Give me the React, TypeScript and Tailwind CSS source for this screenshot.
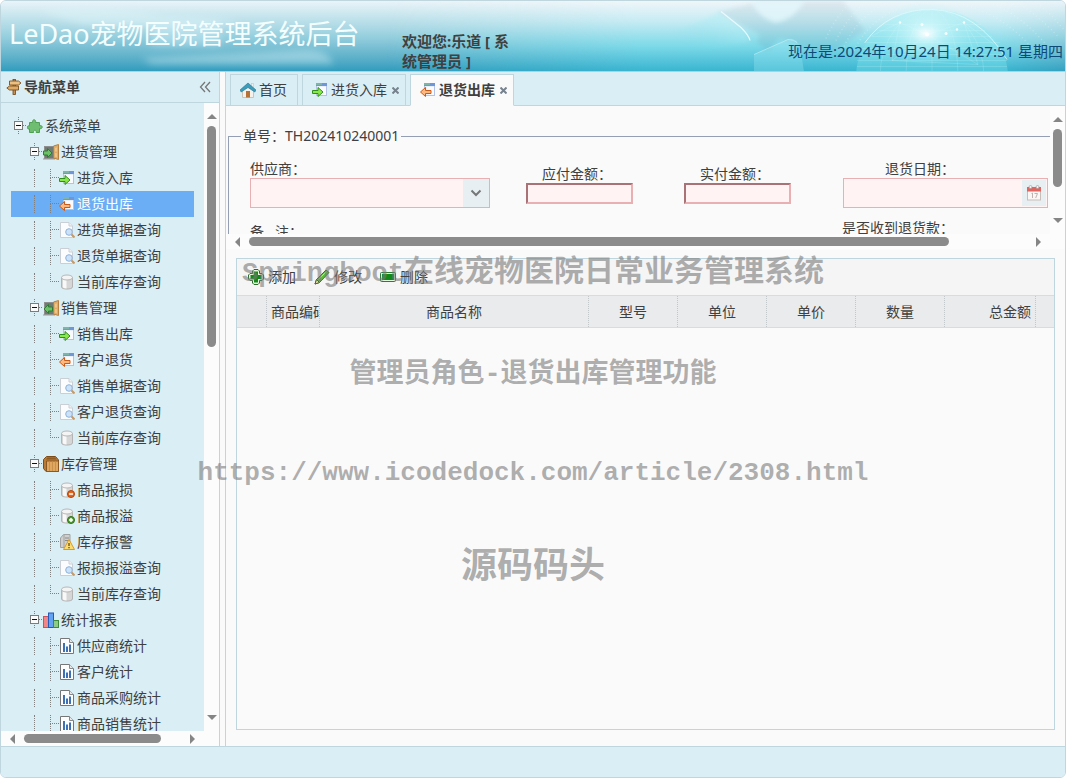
import React, { HTMLAttributes, ReactNode, useState } from 'react';
import { clsx } from 'clsx';

type IconName =
    | 'sign' | 'puzzle' | 'doorIn' | 'doorOut' | 'winIn' | 'winOut' | 'search' | 'db' | 'dbMinus' | 'dbPlus' | 'warn'
    | 'box' | 'bars' | 'report' | 'home' | 'add' | 'pencil' | 'remove' | 'calendar';

const win = (
    <>
        <rect x="4.5" y="1.5" width="10" height="12" fill="#e9effb" stroke="#b4c2e6" />
        <path d="M7 5h7v8H9z" fill="#f9fbff" />
        <rect x="4" y="1" width="11" height="3" fill="#6f97d8" />
        <rect x="4" y="1" width="6" height="2" fill="#7fb5a8" />
    </>
);

const cylinder = (
    <>
        <path d="M2.500 3.500v9.500c0 2.700 11 2.700 11 0V3.500z" fill="#d6d6d6" stroke="#b4b4b4" />
        <path d="M4 5v8.500c.8.600 2 .9 3.500 1V5.500z" fill="#f8f8f8" />
        <ellipse cx="8" cy="3.500" rx="5.500" ry="2.500" fill="#f4f4f4" stroke="#b8b8b8" />
    </>
);

const doorway = (
    <>
        <rect x="1.500" y="2.500" width="10" height="12" fill="#6f7a72" stroke="#8f8f8f" />
        <path d="M0 15h12" stroke="#999" />
        <path d="M10.500 2l5-1.500v15l-5-1.500z" fill="#e0ad68" stroke="#b98140" />
        <path d="M12 4l2-.6v4l-2 .4zM12 9l2 .2v4L12 12.700z" fill="#edc48a" />
    </>
);

const iconShapes: Record<IconName, ReactNode> = {
    sign: (
        <>
            <rect x="7" y="0.500" width="2.500" height="15" fill="#c98f4c" stroke="#6e4719" strokeWidth=".8" />
            <path d="M3.500 2h9l2.500 2-2.500 2h-9z" fill="#ecc083" stroke="#7a4f1e" strokeWidth=".9" />
            <path d="M12.500 7h-9L.8 9l2.700 2h9z" fill="#e0ab68" stroke="#7a4f1e" strokeWidth=".9" />
        </>
    ),
    puzzle: <path d="M2.500 4.500h3.200c-1.200-3.600 4-3.600 2.800 0h4v3.200c3.600-1.200 3.600 4 0 2.800v4H9.200c.8-3-3.400-3-2.600 0H2.500v-3.500c-3 .6-3-3.800 0-3.200z" fill="#6fbd70" stroke="#4f9f52" />,
    doorIn: <>{doorway}<path d="M.5 7h4V4.500L9 9l-4.500 4.500V11h-4z" fill="#6cc068" stroke="#2f7d33" /></>,
    doorOut: <>{doorway}<path d="M9.500 7H5.500V4.500L1 9l4.500 4.500V11h4z" fill="#6cc068" stroke="#2f7d33" /></>,
    winIn: <>{win}<path d="M.5 8.500h5.500v-3l5 4.500-5 4.500v-3H.5z" fill="#8be84a" stroke="#2f8f1d" /></>,
    winOut: <>{win}<path d="M11 8.500H5.500v-3L.5 10l5 4.500v-3H11z" fill="#ffb980" stroke="#cc5a14" /></>,
    search: (
        <>
            <path d="M1.500.5h8.500l3.500 3.500v11.500h-12z" fill="#fbfcfd" stroke="#c9cfd4" />
            <path d="M10 .5v3.500h3.500" fill="#eef1f4" stroke="#c9cfd4" />
            <circle cx="10" cy="10" r="3.300" fill="#cbe2f8" stroke="#8db2dc" />
            <path d="M12.500 12.500l3 3" stroke="#c49a6a" strokeWidth="2" />
        </>
    ),
    db: cylinder,
    dbMinus: <>{cylinder}<circle cx="12" cy="12" r="3.500" fill="#e8651d" stroke="#b24409" /><path d="M10 12h4" stroke="#fff" strokeWidth="1.500" /></>,
    dbPlus: <>{cylinder}<circle cx="12" cy="12" r="3.500" fill="#559e35" stroke="#2f701a" /><path d="M10 12h4M12 10v4" stroke="#fff" strokeWidth="1.500" /></>,
    warn: (
        <>
            <path d="M1.500 4l3-3.500h6.500v13h-9.500z" fill="#cfcfcf" stroke="#a2a2a2" />
            <path d="M5 1v12" stroke="#a2a2a2" />
            <path d="M6 4h4M6 6.500h3" stroke="#8a8a8a" />
            <path d="M10 5.500l5.500 10H4.500z" fill="#fbdc72" stroke="#dc9a22" />
            <path d="M10 9v3M10 13v1.200" stroke="#654710" strokeWidth="1.300" />
        </>
    ),
    box: (
        <>
            <path d="M.5 3.500l3-3h9l3 3.500v11.500H3l-2.500-3z" fill="#b87a35" stroke="#7c4d1a" />
            <path d="M3.500 5h12v10.500h-12z" fill="#dfa75f" stroke="#8a5822" />
            <path d="M6.500 5.500v9.500M9.500 5.500v9.500M12.500 5.500v9.500" stroke="#c9914a" />
            <path d="M3 3.500l1.500-2h7.500L13.500 3.500z" fill="#8f5c24" />
        </>
    ),
    bars: (
        <>
            <rect x="0.500" y="4.500" width="5" height="11" fill="#f28585" stroke="#c9525c" />
            <rect x="5.500" y="1" width="5" height="14.500" fill="#64a2f2" stroke="#2459b8" />
            <rect x="10.500" y="8.500" width="5" height="7" fill="#8ecb88" stroke="#3b8a3d" />
        </>
    ),
    report: (
        <>
            <path d="M1.500.5h9l4 4v11h-13z" fill="#fdfdfd" stroke="#777" />
            <path d="M10.500.5v4h4" fill="#e9e9e9" stroke="#888" />
            <path d="M5 5v9M8 8.500v5.500M11 6.500v7.500" stroke="#3d70b6" strokeWidth="2" />
        </>
    ),
    home: (
        <>
            <path d="M2.500 8L8 3l5.500 5v7.500h-11z" fill="#f4f1ec" stroke="#c9c4bc" />
            <rect x="6" y="9" width="4" height="6.500" fill="#b67236" />
            <rect x="11.500" y="1.500" width="2" height="4" fill="#eee" stroke="#c5c5c5" strokeWidth=".6" />
            <path d="M8 1l8 7-1.200 2L8 5.500 1.200 10 0 8z" fill="#3a9dbc" stroke="#23738f" strokeWidth=".6" />
        </>
    ),
    add: (
        <>
            <path d="M4.500 2l1.500-1.500h4L11.500 2v2.500H14L15.500 6v4L14 11.500h-2.500V14L10 15.500H6L4.500 14v-2.500H2L.5 10V6L2 4.500h2.500z" fill="#e3f8dc" stroke="#2c6b2c" />
            <path d="M6 2.500h4V6h3.500v4H10v3.500H6V10H2.500V6H6z" fill="#0f8a18" />
        </>
    ),
    pencil: (
        <>
            <path d="M1 15l1.500-4.500L12 1l3 2.500-9.500 10z" fill="#5fbf35" stroke="#2c7a22" />
            <path d="M1 15l1.500-4.500 3 3z" fill="#e9dcae" stroke="#3f6f22" />
            <path d="M4.500 10.500L12.500 2.500" stroke="#b4ec8f" />
        </>
    ),
    remove: (
        <>
            <rect x="0.500" y="3.500" width="15" height="9" rx="1" fill="#e3f8dc" stroke="#2c7d33" />
            <rect x="2" y="5" width="12" height="6" fill="#0f8a18" />
        </>
    ),
    calendar: (
        <>
            <rect x="1.500" y="2.500" width="13" height="12.500" fill="#fbf7f4" stroke="#c9bdb9" />
            <rect x="1" y="2" width="14" height="4.500" fill="#dd6660" />
            <circle cx="4.500" cy="2" r="1.500" fill="#f2f2f2" stroke="#999" strokeWidth=".6" />
            <circle cx="11.500" cy="2" r="1.500" fill="#f2f2f2" stroke="#999" strokeWidth=".6" />
            <path d="M5.500 8.500l1-.5v5M8.500 8.500h3l-1.800 4.500" fill="none" stroke="#bdb3af" />
        </>
    ),
};

function Icon({ name, className }: { name: IconName; className?: string; }) {
    return (
        <svg viewBox="0 0 16 16" className={clsx("w-4 h-4 shrink-0", className)} aria-hidden="true">
            {iconShapes[name]}
        </svg>
    );
}

type Group = { name: string; icon: IconName; more?: boolean; items: [IconName, string][]; };

const groups: Group[] = [
    {
        name: '进货管理', icon: 'doorIn',
        items: [['winIn', '进货入库'], ['winOut', '退货出库'], ['search', '进货单据查询'], ['search', '退货单据查询'], ['db', '当前库存查询']],
    },
    {
        name: '销售管理', icon: 'doorOut',
        items: [['winIn', '销售出库'], ['winOut', '客户退货'], ['search', '销售单据查询'], ['search', '客户退货查询'], ['db', '当前库存查询']],
    },
    {
        name: '库存管理', icon: 'box',
        items: [['dbMinus', '商品报损'], ['dbPlus', '商品报溢'], ['warn', '库存报警'], ['search', '报损报溢查询'], ['db', '当前库存查询']],
    },
    {
        name: '统计报表', icon: 'bars', more: true,
        items: [['report', '供应商统计'], ['report', '客户统计'], ['report', '商品采购统计'], ['report', '商品销售统计']],
    },
];

const columns = [
    { label: '', className: 'w-[30px]' },
    { label: '商品编码', className: 'w-[53px]' },
    { label: '商品名称', className: 'w-[269px]' },
    { label: '型号', className: 'w-[89px]' },
    { label: '单位', className: 'w-[89px]' },
    { label: '单价', className: 'w-[89px]' },
    { label: '数量', className: 'w-[89px]' },
    { label: '总金额', className: 'w-[91px]' },
];

function Arrow({ dir }: { dir: 'up' | 'down' | 'left' | 'right'; }) {
    const d = { up: 'M0 8l5-5 5 5z', down: 'M0 2l5 5 5-5z', left: 'M7 0v10L2 5z', right: 'M3 0v10l5-5z' }[dir];
    return <svg viewBox="0 0 10 10" className="w-2.5 h-2.5 shrink-0 fill-[#858585]"><path d={d} /></svg>;
}

function ScrollY({ thumb }: { thumb: string; }) {
    return (
        <div className="w-[15px] shrink-0 py-2 flex flex-col items-center gap-[5px] bg-[#fcfcfc]">
            <Arrow dir="up" />
            <div className="flex-1 w-[9px]"><div className={clsx("w-full bg-[#8b8b8b] rounded-full", thumb)} /></div>
            <Arrow dir="down" />
        </div>
    );
}

function ScrollX({ thumb }: { thumb: string; }) {
    return (
        <div className="h-[15px] shrink-0 pl-[7px] pr-[22px] flex items-center gap-[6px] bg-[#fcfcfc]">
            <Arrow dir="left" />
            <div className="flex-1 h-[9px]"><div className={clsx("h-full bg-[#8b8b8b] rounded-full", thumb)} /></div>
            <Arrow dir="right" />
        </div>
    );
}

function GuideLine() {
    return <span className="w-4 h-[18px] pl-[7px]"><span className="block h-full border-l border-dotted border-[#808080]" /></span>;
}

function GuideBranch({ last }: { last: boolean; }) {
    return (
        <span className="w-4 h-[18px] pl-[7px]">
            <span className="block h-[9px] border-l border-b border-dotted border-[#808080]" />
            {!last && <span className="block h-[9px] border-l border-dotted border-[#808080]" />}
        </span>
    );
}

function Expander({ open, ...rest }: { open: boolean; } & HTMLAttributes<HTMLButtonElement>) {
    return (
        <button className="w-4 h-[18px] shrink-0" aria-label="展开或折叠" {...rest}>
            <svg viewBox="0 0 16 18" className="w-4 h-[18px]" fill="none">
                <path d="M7.500 0v4M7.500 14v4M12 8.500h4" stroke="#808080" strokeDasharray="1 1" />
                <rect x="3.500" y="4.500" width="8" height="8" fill="#fbfbfb" stroke="#7c7c7c" />
                <path d="M5 8.500h5" stroke="#111" />
                {!open && <path d="M7.500 6v5" stroke="#111" />}
            </svg>
        </button>
    );
}

function NodeLabel({ icon, text }: { icon: IconName; text: string; }) {
    return (
        <a href="#" className="flex items-center gap-0.5 whitespace-nowrap"><Icon name={icon} />{text}</a>
    );
}

function TreeGroup({ group, selected, onSelect }: { group: Group; selected: string; onSelect: (key: string) => void; }) {
    const [open, setOpen] = useState(true);
    return (
        <li>
            <div className="h-[26px] pl-4 flex items-center">
                <Expander open={open} onClick={() => setOpen((v) => !v)} />
                <NodeLabel icon={group.icon} text={group.name} />
            </div>
            {open &&
                <ul>
                    {group.items.map(([icon, text], idx) => {
                        const key = `${group.name}/${text}`;
                        return (
                            <li
                                className={clsx("h-[26px] pl-4 flex items-center", key === selected && "bg-[#6caef5] text-white")}
                                onClick={() => onSelect(key)}
                                key={idx}
                            >
                                <GuideLine />
                                <GuideBranch last={!group.more && idx === group.items.length - 1} />
                                <NodeLabel icon={icon} text={text} />
                            </li>
                        );
                    })}
                </ul>
            }
        </li>
    );
}

function Sidebar() {
    const [selected, setSelected] = useState('进货管理/退货出库');
    return (
        <aside className="w-[219px] shrink-0 flex flex-col bg-[#daeef5] border-r border-[#bfd6de]">
            <div className="h-[31px] shrink-0 pl-[5px] pr-2 flex items-center gap-0.5 border-b border-[#bfd6de]">
                <Icon name="sign" />
                <h2 className="flex-1 font-bold">导航菜单</h2>
                <button aria-label="收起菜单">
                    <svg viewBox="0 0 12 12" className="w-3 h-3" fill="none" stroke="#777" strokeWidth="1.300">
                        <path d="M6 1L1.500 6 6 11M11 1L6.500 6l4.500 5" />
                    </svg>
                </button>
            </div>
            <div className="flex-1 min-h-0 flex">
                <nav className="flex-1 min-w-0 p-2.5 overflow-hidden">
                    <div className="h-[26px] flex items-center">
                        <Expander open />
                        <NodeLabel icon="puzzle" text="系统菜单" />
                    </div>
                    <ul>
                        {groups.map((group) => <TreeGroup group={group} selected={selected} onSelect={setSelected} key={group.name} />)}
                    </ul>
                </nav>
                <ScrollY thumb="h-[38%]" />
            </div>
            <ScrollX thumb="w-[87%]" />
        </aside>
    );
}

function HeaderSmudge() {
    return (
        <svg viewBox="0 0 400 71" className="absolute left-0 top-0 w-[400px] h-full" fill="#dff6fb" aria-hidden="true">
            <defs>
                <filter id="soft" x="-20%" y="-50%" width="140%" height="200%"><feGaussianBlur stdDeviation="4" /></filter>
            </defs>
            <g filter="url(#soft)">
                <path d="M35 10q60-8 125 4 60 2 80 8l-50 6-110-4z" fillOpacity=".45" />
                <path d="M140 58q90-4 160-8 30-2 34 14H150z" fillOpacity=".4" />
                <path d="M150 24h70v22h-70z" fillOpacity=".3" />
            </g>
        </svg>
    );
}

function HeaderArt() {
    return (
        <svg viewBox="0 0 680 71" preserveAspectRatio="xMaxYMid slice" className="absolute right-0 top-0 w-[680px] h-full" fill="none" aria-hidden="true">
            <defs>
                <linearGradient id="sky" x1="0" x2="0" y1="0" y2="1">
                    <stop offset="0" stopColor="#f0f6f9" />
                    <stop offset=".3" stopColor="#c5ebf3" />
                    <stop offset=".65" stopColor="#7bd9e8" />
                    <stop offset="1" stopColor="#38b4d0" />
                </linearGradient>
                <linearGradient id="edge" x1="0" x2="1">
                    <stop offset="0" stopColor="#000" />
                    <stop offset=".38" stopColor="#fff" />
                    <stop offset=".9" stopColor="#fff" />
                    <stop offset="1" stopColor="#333" />
                </linearGradient>
                <linearGradient id="fade" x1="0" x2="1" y1="1" y2="0">
                    <stop offset=".2" stopColor="#7fdfeb" stopOpacity="0" />
                    <stop offset="1" stopColor="#c9f5fa" stopOpacity=".75" />
                </linearGradient>
                <linearGradient id="gray" x1="0" x2="0" y1="0" y2="1">
                    <stop offset="0" stopColor="#b7c6d2" stopOpacity=".25" />
                    <stop offset="1" stopColor="#5aa9c0" stopOpacity=".3" />
                </linearGradient>
                <radialGradient id="glow">
                    <stop offset="0" stopColor="#fff" stopOpacity=".95" />
                    <stop offset=".3" stopColor="#d8fbfd" stopOpacity=".6" />
                    <stop offset="1" stopColor="#a8f0f6" stopOpacity="0" />
                </radialGradient>
                <mask id="edgeMask"><path d="M0 0h680v71H0z" fill="url(#edge)" /></mask>
                <filter id="haze" x="-20%" y="-20%" width="140%" height="140%"><feGaussianBlur stdDeviation="2" /></filter>
            </defs>
            <path d="M0 0h680v71H0z" fill="url(#sky)" mask="url(#edgeMask)" />
            <path d="M332 12l46-12h80l22 30-40 26-44-18q-8 4-12 14l-12-10 3-8z" fill="url(#gray)" filter="url(#haze)" />
            <path d="M290 32l45-20 25 20 4 9-24 4-40 6z" fill="url(#fade)" filter="url(#haze)" />
            <path d="M336 11l20 16q8 8 9 13" stroke="#effdff" strokeOpacity=".85" strokeWidth="1.200" />
            <path d="M366 0q6 16 24 22 18-2 30-22z" fill="#e6fafd" fillOpacity=".75" filter="url(#haze)" />
            <path d="M369 54l36-16q6 0 10 7l4 26h-50z" fill="#a5ecf4" fillOpacity=".3" />
            <path d="M369 54l34-15q6 0 9 3" stroke="#d5f8fc" strokeOpacity=".5" />
            <ellipse cx="547" cy="76" rx="76" ry="67" fill="#8cf0f5" fillOpacity=".3" />
            <path d="M480 42q24-34 68-33 44 2 74 50" stroke="#e6fdff" strokeOpacity=".7" />
            <g stroke="#e2fdff" strokeOpacity=".22" strokeWidth=".8">
                <ellipse cx="547" cy="76" rx="52" ry="67" />
                <ellipse cx="547" cy="76" rx="26" ry="67" />
                <path d="M547 9v62M487 36h120M479 42h136M477 48h140M474 54h146M472 60h150M472 66h150M500 24h96M494 30h106" />
                <path d="M485 36l30-14 27 12 37-12 30 22M515 22l-8 38M579 22l14 42M542 34l-35 26 86 4z" />
            </g>
            <g stroke="#f0fbfd" strokeOpacity=".3" strokeDasharray="1 3" strokeWidth="1.500">
                <path d="M469 50Q491 4 549 2t100 48M459 46Q483-6 549-8t112 52M451 40Q479-18 549-20t124 56M441 38Q470-28 549-32t132 64" />
            </g>
            <ellipse cx="541" cy="33" rx="50" ry="32" fill="url(#glow)" />
            <g fill="#fff" fillOpacity=".9">
                <circle cx="542" cy="34" r="2" /><circle cx="515" cy="22" r="1.200" /><circle cx="537" cy="24" r="1.500" />
                <circle cx="579" cy="22" r="1.200" /><circle cx="561" cy="33" r="1.500" /><circle cx="572" cy="29" r="1.200" />
            </g>
        </svg>
    );
}

function Header() {
    return (
        <header className="relative h-[71px] shrink-0 flex items-start bg-linear-to-b from-[#e9f4f9] via-[#97d0de] to-[#2f9dbd] border-b border-[#a9d3df]">
            <HeaderSmudge />
            <HeaderArt />
            <h1 className="relative w-[401px] shrink-0 pl-2 pt-[13px] text-[27px] leading-10 text-[#f4feff] whitespace-nowrap">LeDao宠物医院管理系统后台</h1>
            <p className="relative w-[120px] shrink-0 pt-[30px] text-[15px] leading-5 font-bold text-[#404040]">欢迎您:乐道 [ 系统管理员 ]</p>
            <p className="relative flex-1 pt-10 pr-0.5 text-right text-[15px] leading-5 text-[#0c4a78] whitespace-nowrap">现在是:2024年10月24日 14:27:51 星期四</p>
        </header>
    );
}

function Tab({ icon, text, active, closable }: { icon: IconName; text: string; active?: boolean; closable?: boolean; }) {
    return (
        <div className={clsx("pl-[9px] flex items-center border border-[#bfd6de]", closable ? "pr-1.5" : "pr-2.5", active ? "bg-[#fafafa] border-b-[#fafafa] font-bold" : "bg-[#daeef5]")}>
            <button className="flex items-center gap-[3px]" role="tab" aria-selected={!!active}><Icon name={icon} />{text}</button>
            {closable &&
                <button className="pl-[5px]" aria-label={`关闭${text}`}>
                    <svg viewBox="0 0 7 7" className="w-[7px] h-[7px]" stroke="#76828e" strokeWidth="2"><path d="M.5.5l6 6M6.500.5l-6 6" /></svg>
                </button>
            }
        </div>
    );
}

function MoneyField({ id, label }: { id: string; label: string; }) {
    return (
        <div className="w-[107px] flex flex-col">
            <label htmlFor={id} className="pl-4 leading-[18px]">{label}</label>
            <input id={id} className="w-full h-[21px] bg-[#fff3f3] border-2 border-t-[#a87276] border-l-[#a87276] border-r-[#e8b0b2] border-b-[#e8b0b2] outline-none" />
        </div>
    );
}

function OrderForm() {
    return (
        <div className="h-[143px] shrink-0 flex flex-col">
            <div className="flex-1 min-h-0 flex">
                <form className="flex-1 min-w-0 pt-5 pl-0.5 overflow-hidden">
                    <fieldset className="h-[180px] min-w-[860px] pl-3 border border-[#959fb3]">
                        <legend className="px-0.5 leading-5">单号：TH202410240001</legend>
                        <div className="pl-[9px] pt-3.5 flex items-center">
                            <div className="w-[240px] mr-9">
                                <label htmlFor="supplier" className="block leading-[18px]">供应商：</label>
                                <div className="relative">
                                    <select id="supplier" className="block w-full h-[30px] appearance-none bg-[#fff3f3] border border-[#e8b0b2] outline-none"><option></option></select>
                                    <span className="absolute inset-y-px right-px w-[26px] grid place-items-center bg-[#e8eff3] pointer-events-none">
                                        <svg viewBox="0 0 12 8" className="w-3 h-2" fill="none" stroke="#777" strokeWidth="2"><path d="M1.500 1.500L6 6l4.500-4.500" /></svg>
                                    </span>
                                </div>
                            </div>
                            <MoneyField id="payable" label="应付金额：" />
                            <div className="w-[51px]" />
                            <MoneyField id="paid" label="实付金额：" />
                            <div className="w-[52px]" />
                            <div className="w-[205px]">
                                <label htmlFor="date" className="block w-28 text-right leading-[18px]">退货日期：</label>
                                <div className="h-[30px] p-px flex bg-[#fff3f3] border border-[#e8b0b2]">
                                    <input id="date" className="flex-1 min-w-0 outline-none" />
                                    <button type="button" className="w-6 grid place-items-center bg-[#e8eff3]" aria-label="选择日期"><Icon name="calendar" /></button>
                                </div>
                            </div>
                        </div>
                        <div className="pl-[9px] pt-2.5 flex items-start">
                            <label htmlFor="remark" className="w-[592px] pt-1 leading-5 whitespace-pre">备   注：</label>
                            <label htmlFor="received" className="leading-5">是否收到退货款：</label>
                        </div>
                        <div className="pl-[9px] flex gap-9">
                            <input id="remark" className="w-[240px] border" />
                            <input id="received" type="checkbox" />
                        </div>
                    </fieldset>
                </form>
                <ScrollY thumb="h-[71%]" />
            </div>
            <ScrollX thumb="w-[90%]" />
        </div>
    );
}

function GoodsGrid() {
    return (
        <section className="flex-1 mx-2.5 mt-[9px] mb-4 bg-[#fafafa] border border-[#bfd6de] overflow-hidden">
            <div className="h-9 pl-[11px] flex items-center gap-[18px] bg-[#f5f5f5]">
                <button className="flex items-center gap-1"><Icon name="add" />添加</button>
                <button className="flex items-center gap-1"><Icon name="pencil" />修改</button>
                <button className="flex items-center gap-1"><Icon name="remove" />删除</button>
            </div>
            <table className="w-full h-[33px] table-fixed border-separate border-spacing-0 border-y border-[#d9dcde] bg-[#e9ebec]">
                <thead>
                    <tr>
                        {columns.map(({ label, className }, idx) => (
                            <th className={clsx("px-1 font-normal border-r border-dotted border-[#c4c7c9] overflow-hidden whitespace-nowrap", idx === 1 && "text-left", idx === 7 && "text-right", className)} key={idx}>
                                {label}
                            </th>
                        ))}
                        <th />
                    </tr>
                </thead>
            </table>
        </section>
    );
}

function Watermark() {
    return (
        <div className="absolute inset-x-0 top-[252px] flex flex-col items-center font-[Liberation_Mono,Noto_Sans_CJK_SC,monospace] font-bold text-[27px] leading-10 text-[#7a7a7a]/60 whitespace-nowrap pointer-events-none">
            <p>Springboot<span className="text-[30px]">在线宠物医院日常业务管理系统</span></p>
            <p className="mt-[61px]">管理员角色-退货出库管理功能</p>
            <p className="mt-[58px] text-[26px]">https://www.icodedock.com/article/2308.html</p>
            <p className="mt-[56px] text-[36px]">源码码头</p>
        </div>
    );
}

export default function App() {
    return (
        <div className="relative h-screen flex flex-col bg-[#fafafa] border border-[#bfd6de] rounded-md overflow-hidden font-[Noto_Sans,Noto_Sans_CJK_SC,sans-serif] text-sm text-[#404040]">
            <Header />
            <div className="flex-1 min-h-0 flex gap-[5px]">
                <Sidebar />
                <main className="flex-1 min-w-0 flex flex-col border-l border-[#bfd6de]">
                    <div className="h-[34px] shrink-0 pt-0.5 pl-1 flex items-stretch gap-1 bg-[#daeef5] shadow-[inset_0_-1px_0_#bfd6de]" role="tablist">
                        <Tab icon="home" text="首页" />
                        <Tab icon="winIn" text="进货入库" closable />
                        <Tab icon="winOut" text="退货出库" active closable />
                    </div>
                    <OrderForm />
                    <GoodsGrid />
                </main>
            </div>
            <footer className="h-[31px] shrink-0 bg-[#daeef5] border-t border-[#bfd6de]" />
            <Watermark />
        </div>
    );
}
